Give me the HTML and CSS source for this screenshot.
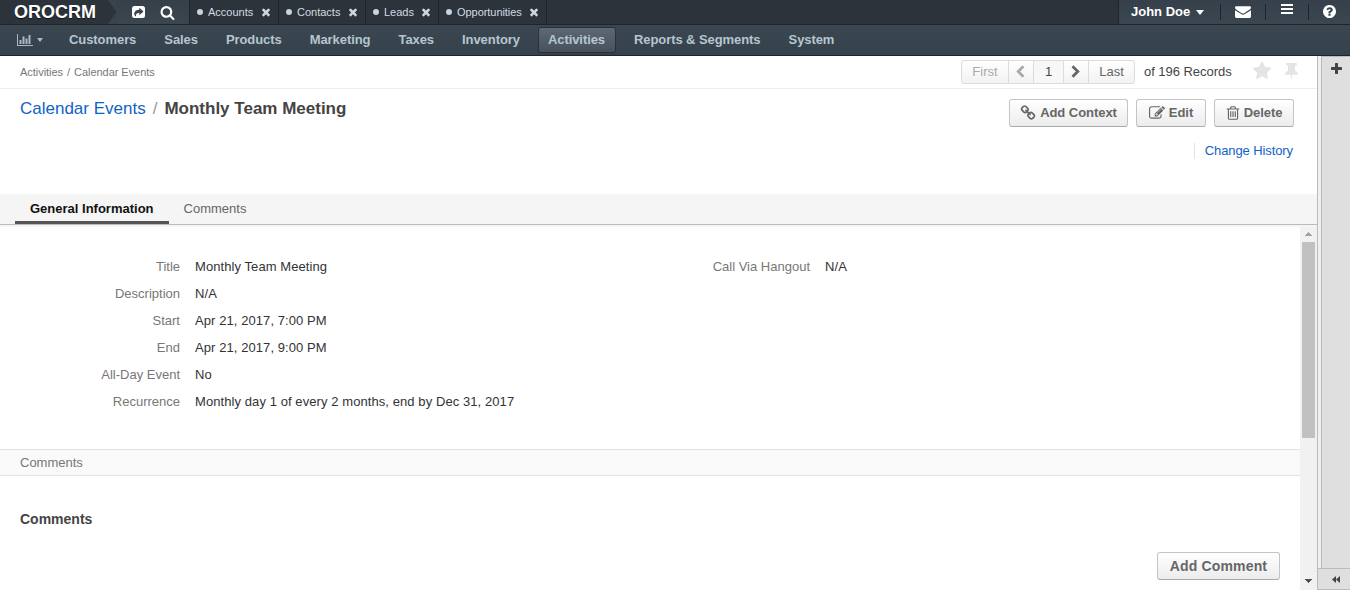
FILE: index.html
```html
<!DOCTYPE html>
<html lang="en">
<head>
<meta charset="utf-8">
<title>Monthly Team Meeting - Calendar Events - Activities</title>
<link rel="stylesheet" href="styles.css">
</head>
<body>
<svg class="defs" width="0" height="0">
  <symbol id="times" viewBox="0 0 1792 1792"><path d="M1490 1322q0 40-28 68l-136 136q-28 28-68 28t-68-28l-294-294-294 294q-28 28-68 28t-68-28l-136-136q-28-28-28-68t28-68l294-294-294-294q-28-28-28-68t28-68l136-136q28-28 68-28t68 28l294 294 294-294q28-28 68-28t68 28l136 136q28 28 28 68t-28 68l-294 294 294 294q28 28 28 68z"/></symbol>
</svg>
<header class="topbar">
  <div class="brand">OROCRM</div>
  <svg class="brand-arrow" width="10" height="24" viewBox="0 0 10 24"><path d="M0 0h1l8.500 12L1 24H0z"/></svg>
  <div class="tools">
    <svg class="share" width="14" height="13" viewBox="0 0 14 13"><path fill-rule="evenodd" d="M2.500 0h8A2.500 2.500 0 0 1 13 2.500v7a2.500 2.500 0 0 1-2.500 2.500h-8A2.500 2.500 0 0 1 0 9.500v-7A2.500 2.500 0 0 1 2.500 0zM7.300 1.700v2C4.300 3.700 2.200 5.300 2.200 7.800c0 1.400.7 2.300 1.800 2.800-.5-2.500.8-3.600 3.300-3.600v2.200L11.500 5.500z"/></svg>
    <svg class="search" width="15" height="15" viewBox="0 0 1792 1792"><path d="M1216 832q0-185-131.500-316.500t-316.500-131.500-316.500 131.500-131.500 316.500 131.500 316.500 316.500 131.500 316.500-131.500 131.500-316.500zm512 832q0 52-38 90t-90 38q-54 0-90-38l-343-342q-179 124-399 124-143 0-273.500-55.500t-225-150-150-225-55.500-273.500 55.500-273.500 150-225 225-150 273.500-55.500 273.500 55.500 225 150 150 225 55.500 273.500q0 220-124 399l343 343q37 37 37 90z"/></svg>
  </div>
  <div class="pins">
    <div class="pin pin-accounts"><i></i><span>Accounts</span><svg width="12" height="12"><use href="#times"/></svg></div>
    <div class="pin pin-contacts"><i></i><span>Contacts</span><svg width="12" height="12"><use href="#times"/></svg></div>
    <div class="pin pin-leads"><i></i><span>Leads</span><svg width="12" height="12"><use href="#times"/></svg></div>
    <div class="pin pin-opps"><i></i><span>Opportunities</span><svg width="12" height="12"><use href="#times"/></svg></div>
  </div>
  <div class="user">
    <div class="user-name">John Doe<i class="caret"></i></div>
    <div class="user-item mail"><svg width="16" height="15" viewBox="0 0 1792 1792" preserveAspectRatio="none"><path d="M1792 710v794q0 66-47 113t-113 47h-1472q-66 0-113-47t-47-113v-794q44 49 101 87 362 246 497 345 57 42 92.500 65.500t94.500 48 110 24.500h2q51 0 110-24.500t94.500-48 92.500-65.500q170-123 498-345 57-39 100-87zm0-294q0 79-49 151t-122 123q-376 261-468 325-10 7-42.500 31t-54 38.500-52 32.500-57.500 27-50 9h-2q-23 0-50-9t-57.500-27-52-32.500-54-38.500-42.500-31q-91-64-262-182.500t-205-142.500q-62-42-117-115.500t-55-136.500q0-78 41.500-130t118.500-52h1472q65 0 112.500 47t47.500 113z"/></svg></div>
    <div class="user-item burger"><svg width="12" height="10" viewBox="0 0 12 10"><path d="M0 0h12v2H0zM0 4h12v2H0zM0 8h12v2H0z"/></svg></div>
    <div class="user-item help"><svg width="13" height="13" viewBox="128 128 1536 1536"><path d="M1024 1376v-192q0-14-9-23t-23-9h-192q-14 0-23 9t-9 23v192q0 14 9 23t23 9h192q14 0 23-9t9-23zm256-672q0-88-55.500-163t-138.500-116-170-41q-243 0-371 213-15 24 8 42l132 100q7 6 19 6 16 0 25-12 53-68 86-92 34-24 86-24 48 0 85.500 26t37.500 59q0 38-20 61t-68 45q-63 28-115.500 86.500t-52.500 125.500v36q0 14 9 23t23 9h192q14 0 23-9t9-23q0-19 21.500-49.500t54.500-49.500q32-18 49-28.500t46-35 44.500-48 28-60.500 12.500-81zm384 192q0 209-103 385.500t-279.500 279.500-385.500 103-385.500-103-279.500-279.500-103-385.500 103-385.500 279.500-279.500 385.500-103 385.500 103 279.500 279.500 103 385.500z"/></svg></div>
  </div>
</header>
<nav class="menu">
  <a class="dash"><svg width="16" height="12" viewBox="0 0 16 12"><path d="M0 0h1v11h15v1H0zM2.500 6h2v4h-2zM5.500 2.500h2V10h-2zM8.500 4.500h2V10h-2zM11.500 1h2v9h-2z"/></svg><i class="caret small"></i></a>
  <a>Customers</a><a>Sales</a><a>Products</a><a>Marketing</a><a>Taxes</a><a>Inventory</a><a class="active">Activities</a><a>Reports &amp; Segments</a><a>System</a>
</nav>
<div class="page">
  <main class="main">
    <div class="crumb-row">
      <div class="crumbs">Activities<span>/</span>Calendar Events</div>
      <div class="pager">
        <div class="pager-group">
          <span class="pg first">First</span>
          <span class="pg prev"><svg width="9" height="13" viewBox="0 0 9 13"><path d="M7.500 1.200L2.200 6.500l5.300 5.300"/></svg></span>
          <span class="pg num">1</span>
          <span class="pg next"><svg width="9" height="13" viewBox="0 0 9 13"><path d="M1.500 1.200l5.300 5.300-5.300 5.300"/></svg></span>
          <span class="pg last">Last</span>
        </div>
        <span class="records">of 196 Records</span>
        <svg class="star" width="20" height="20" viewBox="0 0 1792 1792"><path d="M1728 647q0 22-26 48l-363 354 86 500q1 7 1 20 0 21-10.500 35.500t-30.500 14.500q-19 0-40-12l-449-236-449 236q-22 12-40 12-21 0-31.500-14.500t-10.500-35.500q0-6 2-20l86-500-364-354q-25-27-25-48 0-37 56-46l502-73 225-455q19-41 49-41t49 41l225 455 502 73q56 9 56 46z"/></svg>
        <svg class="pushpin" width="13" height="18" viewBox="0 0 13 18"><path d="M2 0h9q1 0 1 1.200t-1 1.300h-1V8q3 1 3 3.700H7.300L6.500 18l-.8-6.300H0Q0 9 3 8V2.500H2Q1 2.400 1 1.200T2 0z"/></svg>
      </div>
    </div>
    <div class="title-row">
      <h1><a>Calendar Events</a><i>/</i><b>Monthly Team Meeting</b></h1>
      <div class="actions">
        <div class="buttons">
          <button class="btn context"><svg width="16" height="16" viewBox="0 0 1792 1792"><path d="M1520 1216q0-40-28-68l-208-208q-28-28-68-28-42 0-72 32 3 3 19 18.500t21.500 21.500 15 19 13 25.500 3.500 27.500q0 40-28 68t-68 28q-15 0-27.500-3.500t-25.500-13-19-15-21.500-21.500-18.500-19q-33 31-33 73 0 40 28 68l206 207q27 27 68 27 40 0 68-26l147-146q28-28 28-67zm-703-705q0-40-28-68l-206-207q-28-28-68-28-39 0-68 27l-147 146q-28 28-28 67 0 40 28 68l208 208q27 27 68 27 42 0 72-31-3-3-19-18.500t-21.500-21.500-15-19-13-25.500-3.500-27.500q0-40 28-68t68-28q15 0 27.500 3.500t25.500 13 19 15 21.500 21.500 18.500 19q33-31 33-73zm895 705q0 120-85 203l-147 146q-83 83-203 83-121 0-204-85l-206-207q-83-83-83-203 0-123 88-209l-88-88q-86 88-208 88-120 0-204-84l-208-208q-84-84-84-204t85-203l147-146q83-83 203-83 121 0 204 85l206 207q83 83 83 203 0 123-88 209l88 88q86-88 208-88 120 0 204 84l208 208q84 84 84 204z"/></svg>Add Context</button>
          <button class="btn edit"><svg width="16" height="16" viewBox="0 0 1792 1792"><path d="M888 1184l116-116-152-152-116 116v56h96v96h56zm440-720q-16-16-33 1l-350 350q-17 17-1 33t33-1l350-350q17-17 1-33zm80 594v190q0 119-84.500 203.500t-203.500 84.500h-832q-119 0-203.500-84.500t-84.500-203.500v-832q0-119 84.500-203.500t203.500-84.500h832q63 0 117 25 15 7 18 23 3 17-9 29l-49 49q-14 14-32 8-23-6-45-6h-832q-66 0-113 47t-47 113v832q0 66 47 113t113 47h832q66 0 113-47t47-113v-126q0-13 9-22l64-64q15-15 35-7t20 29zm-96-738l288 288-672 672h-288v-288zm444 132l-92 92-288-288 92-92q28-28 68-28t68 28l152 152q28 28 28 68t-28 68z"/></svg>Edit</button>
          <button class="btn delete"><svg width="16" height="16" viewBox="0 0 1792 1792"><path d="M704 736v576q0 14-9 23t-23 9h-64q-14 0-23-9t-9-23v-576q0-14 9-23t23-9h64q14 0 23 9t9 23zm256 0v576q0 14-9 23t-23 9h-64q-14 0-23-9t-9-23v-576q0-14 9-23t23-9h64q14 0 23 9t9 23zm256 0v576q0 14-9 23t-23 9h-64q-14 0-23-9t-9-23v-576q0-14 9-23t23-9h64q14 0 23 9t9 23zm128 724v-948h-896v948q0 22 7 40.500t14.500 27 10.500 8.500h832q3 0 10.500-8.500t14.500-27 7-40.500zm-672-1076h448l-48-117q-7-9-17-11h-317q-10 2-17 11zm928 32v64q0 14-9 23t-23 9h-96v948q0 83-47 143.500t-113 60.500h-832q-66 0-113-58.500t-47-141.500v-952h-96q-14 0-23-9t-9-23v-64q0-14 9-23t23-9h309l70-167q15-37 54-63t79-26h320q40 0 79 26t54 63l70 167h309q14 0 23 9t9 23z"/></svg>Delete</button>
        </div>
        <a class="history">Change History</a>
      </div>
    </div>
    <div class="tabs"><a class="tab on">General Information</a><a class="tab">Comments</a></div>
    <div class="scroller">
      <div class="content">
        <div class="info">
          <dl class="col left">
            <dt>Title</dt><dd>Monthly Team Meeting</dd>
            <dt>Description</dt><dd>N/A</dd>
            <dt>Start</dt><dd>Apr 21, 2017, 7:00 PM</dd>
            <dt>End</dt><dd>Apr 21, 2017, 9:00 PM</dd>
            <dt>All-Day Event</dt><dd>No</dd>
            <dt>Recurrence</dt><dd>Monthly day 1 of every 2 months, end by Dec 31, 2017</dd>
          </dl>
          <dl class="col right"><dt>Call Via Hangout</dt><dd>N/A</dd></dl>
        </div>
        <div class="section">Comments</div>
        <h2>Comments</h2>
        <div class="add"><button class="btn comment">Add Comment</button></div>
      </div>
      <div class="scrollbar">
        <svg width="7" height="4" viewBox="0 0 7 4"><path fill="#a3a3a3" d="M3 0h1v1h1v1h1v1h1v1H0V3h1V2h1V1h1z"/></svg>
        <div class="thumb"></div>
        <svg width="7" height="4" viewBox="0 0 7 4"><path fill="#505050" d="M0 0h7v1H6v1H5v1H4v1H3V3H2V2H1V1H0z"/></svg>
      </div>
    </div>
  </main>
  <aside class="side">
    <div class="side-body"><svg width="11" height="11" viewBox="192 128 1408 1408"><path d="M1600 736v192q0 40-28 68t-68 28h-416v416q0 40-28 68t-68 28h-192q-40 0-68-28t-28-68v-416h-416q-40 0-68-28t-28-68v-192q0-40 28-68t68-28h416v-416q0-40 28-68t68-28h192q40 0 68 28t28 68v416h416q40 0 68 28t28 68z"/></svg></div>
    <div class="side-foot"><svg width="8" height="7" viewBox="0 0 8 7"><path d="M4 0v7L0 3.500zM8 0v7L4 3.500z"/></svg></div>
  </aside>
</div>
</body>
</html>
```
FILE: styles.css
```css
* { box-sizing: border-box; }
body { margin: 0; width: 1350px; height: 590px; overflow: hidden; background: #fff; color: #444; font: 13px/20px "Liberation Sans", Arial, sans-serif; }
svg { display: block; flex: none; }
.defs { position: absolute; }
a, span, b, h1, h2, button, .brand, .user-name { white-space: nowrap; }

.topbar { display: flex; height: 25px; border-bottom: 1px solid #1d242b; background: #2c333b; }
.brand { width: 107px; padding-left: 14px; background: #2c333b; color: #fff; font-size: 18px; font-weight: bold; line-height: 24px; text-shadow: 0 1px 1px #111; }
.brand-arrow { background: #37434d; fill: #2c333b; }
.tools { display: flex; width: 72px; background: linear-gradient(#35404a, #3a4650); fill: #fff; }
.share { margin: 6px 0 0 15px; }
.search { margin: 5px 0 0 14px; }
.pins { display: flex; flex: 1; }
.pin { display: flex; align-items: center; border-left: 1px solid #1d242b; color: #d5dbe0; font-size: 11px; padding-left: 7px; }
.pin i { width: 6px; height: 6px; border-radius: 50%; background: #cbd3da; margin-right: 5px; }
.pin span { flex: 1; }
.pin svg { fill: #cfd6dc; margin-right: 6px; }
.pin-accounts { width: 89px; }
.pin-contacts { width: 87px; }
.pin-leads { width: 73px; }
.pin-opps { width: 109px; border-right: 1px solid #1d242b; letter-spacing: -0.05px; }
.user { display: flex; width: 232px; border-left: 1px solid #1d242b; background: linear-gradient(#35404a, #3a4650); fill: #fff; }
.user-name { display: flex; align-items: center; width: 101px; padding-left: 12px; color: #fff; font-weight: bold; line-height: 24px; }
.caret { border: 4.500px solid transparent; border-top: 5px solid #fff; border-bottom: 0; margin-left: 6px; }
.caret.small { border-width: 4px 3.500px 0; border-top-color: #a9bac4; margin-left: 4px; }
.user-item { height: 16px; margin-top: 4px; border-left: 1px solid #1d242b; }
.mail { width: 45px; padding: 0 0 0 14px; }
.burger { width: 43px; padding-left: 15px; }
.help { padding: 1px 0 0 14px; }

.menu { display: flex; align-items: flex-start; height: 31px; padding: 2px 0 0 7px; border-bottom: 1px solid #1c252d; background: linear-gradient(#3a4751, #35424c); }
.menu a { height: 26px; padding: 0 10px; margin-right: 8px; line-height: 25px; font-weight: bold; color: #b5c6d0; letter-spacing: -0.07px; }
.menu .dash { display: flex; align-items: center; width: 45px; fill: #a9bac4; margin-right: 7px; }
.menu .active { width: 78px; padding: 0 9px; border: 1px solid #27313a; border-radius: 3px; background: linear-gradient(#5c6874, #47515b); line-height: 23px; }

.page { display: flex; height: 534px; }
.main { width: 1317px; display: flex; flex-direction: column; }
.crumb-row { display: flex; justify-content: space-between; height: 33px; border-bottom: 1px solid #eee; }
.crumbs { padding-left: 20px; font-size: 11px; line-height: 32px; letter-spacing: -0.04px; color: #777; }
.crumbs span { margin: 0 4px; }
.pager { display: flex; padding: 4px 18px 0 0; }
.pager-group { display: flex; height: 24px; border: 1px solid #dcdcdc; border-radius: 3px; background: linear-gradient(#fff, #f2f2f2); overflow: hidden; line-height: 21px; }
.pg { display: flex; justify-content: center; border-left: 1px solid #dcdcdc; color: #666; }
.pg svg { margin-top: 4px; margin-right: 1px; fill: none; stroke: #666; stroke-width: 2.800; }
.first { width: 46px; border: 0; color: #aaa; }
.prev { width: 25px; }
.prev svg { stroke: #aaa; }
.num { width: 30px; background: #f7f7f7; color: #444; }
.next { width: 25px; }
.last { width: 46px; }
.records { width: 108px; padding-left: 9px; line-height: 23px; letter-spacing: -0.04px; }
.star { margin-left: 9px; margin-top: 1px; fill: #e4e4e4; }
.pushpin { margin: 3px 0 0 13px; margin-right: 1px; fill: #e4e4e4; }

.title-row { display: flex; justify-content: space-between; height: 105px; padding: 10px 23px 0 20px; }
h1 { margin: 0; font-size: 17px; line-height: 19px; font-weight: normal; }
h1 a, .history { color: #0f63c6; }
h1 i { margin: 0 7px; color: #999; font-style: normal; }
.buttons { display: flex; gap: 8px; }
.btn { display: flex; align-items: center; justify-content: center; height: 28px; padding: 0; border: 1px solid #c4c4c4; border-bottom-color: #aaa; border-radius: 3px; background: linear-gradient(#fff, #ececec); color: #666; fill: #666; font: bold 13px/20px "Liberation Sans", Arial, sans-serif; }
.btn svg { margin-right: 4px; }
.context { width: 119px; letter-spacing: -0.05px; }
.edit { width: 70px; }
.delete { width: 80px; letter-spacing: -0.05px; padding-right: 1px; }
.btn.delete svg { margin-right: 3px; }
.comment { width: 123px; font-size: 14px; letter-spacing: .15px; }
.actions { display: flex; flex-direction: column; align-items: flex-end; }
.history { margin-top: 16px; margin-right: 1px; padding-left: 10px; border-left: 1px solid #e2e2e2; line-height: 16px; letter-spacing: -0.1px; }

.tabs { display: flex; height: 31px; padding-left: 15px; background: #f5f5f5; border-bottom: 1px solid #bbb; }
.tab { height: 30px; padding: 0 15px; line-height: 29px; color: #666; }
.on { color: #111; font-weight: bold; border-bottom: 3px solid #555; }
.scroller { display: flex; flex: 1; border-top: 2px solid #f5f5f5; }
.content { width: 1300px; }
.info { display: flex; height: 222px; padding-top: 26px; }
dl { display: grid; grid-template-columns: 180px 1fr; grid-auto-rows: 27px; column-gap: 15px; margin: 0; line-height: 27px; width: 630px; }
dt { text-align: right; color: #777; }
dd { margin: 0; color: #333; letter-spacing: 0.08px; }
.section { height: 27px; padding-left: 20px; border: solid #e3e3e3; border-width: 1px 0; background: #fafafa; color: #777; line-height: 25px; }
h2 { margin: 33px 0 0 20px; font-size: 14px; line-height: 20px; }
.add { display: flex; justify-content: flex-end; padding: 23px 20px 0 0; }
.scrollbar { width: 17px; background: #f1f1f1; display: flex; flex-direction: column; align-items: center; padding: 5px 0 7px; }
.thumb { width: 13px; height: 196px; margin-top: 6px; margin-bottom: auto; background: #c1c1c1; }
.side { width: 33px; border-left: 1px solid #bbb; background: #f0f0f0; }
.side-body { height: 512px; margin-left: 3px; padding: 6px 0 0 9px; border-left: 1px solid #bbb; border-top: 1px solid #bbb; background: #dfdfdf; fill: #444; }
.side-foot { height: 22px; padding: 7px 0 0 14px; border: solid #bbb; border-width: 1px 0; background: #dfdfdf; fill: #444; }
```
